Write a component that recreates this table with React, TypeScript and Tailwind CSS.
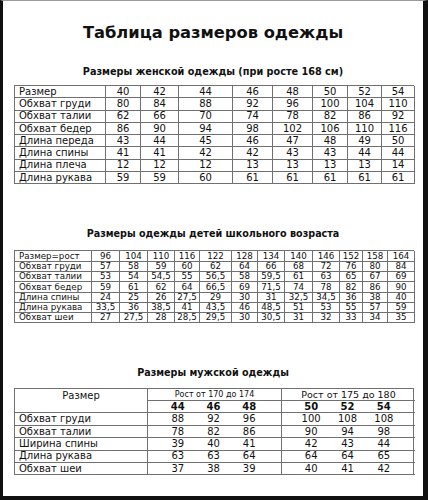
import React from "react";

const font = { fontFamily: '"DejaVu Sans", Verdana, sans-serif' };

const t1Cols = [91, 35, 38, 54, 40, 40, 35, 34, 33];
const t1Rows: string[][] = [
  ["Размер", "40", "42", "44", "46", "48", "50", "52", "54"],
  ["Обхват груди", "80", "84", "88", "92", "96", "100", "104", "110"],
  ["Обхват талии", "62", "66", "70", "74", "78", "82", "86", "92"],
  ["Обхват бедер", "86", "90", "94", "98", "102", "106", "110", "116"],
  ["Длина переда", "43", "44", "45", "46", "47", "48", "49", "50"],
  ["Длина спины", "41", "41", "42", "42", "43", "43", "44", "44"],
  ["Длина плеча", "12", "12", "12", "13", "13", "13", "13", "14"],
  ["Длина рукава", "59", "59", "60", "61", "61", "61", "61", "61"],
];

const t2Cols = [77, 28, 28, 27, 25, 32, 26, 27, 28, 27, 23, 25, 27];
const t2Rows: string[][] = [
  ["Размер=рост", "96", "104", "110", "116", "122", "128", "134", "140", "146", "152", "158", "164"],
  ["Обхват груди", "57", "58", "59", "60", "62", "64", "66", "68", "72", "76", "80", "84"],
  ["Обхват талии", "53", "54", "54,5", "55", "56,5", "58", "59,5", "61", "63", "65", "67", "69"],
  ["Обхват бедер", "59", "61", "62", "64", "66,5", "69", "71,5", "74", "78", "82", "86", "90"],
  ["Длина спины", "24", "25", "26", "27,5", "29", "30", "31", "32,5", "34,5", "36", "38", "40"],
  ["Длина рукава", "33,5", "36", "38,5", "41", "43,5", "46", "48,5", "51", "53", "55", "57", "59"],
  ["Обхват шеи", "27", "27,5", "28", "28,5", "29,5", "30", "30,5", "31", "32", "33", "34", "35"],
];

const t3Rows: { label: string; a: string[]; b: string[] }[] = [
  { label: "Обхват груди", a: ["88", "92", "96"], b: ["100", "108", "108"] },
  { label: "Обхват талии", a: ["78", "82", "86"], b: ["90", "94", "98"] },
  { label: "Ширина спины", a: ["39", "40", "41"], b: ["42", "43", "44"] },
  { label: "Длина рукава", a: ["63", "63", "64"], b: ["64", "64", "65"] },
  { label: "Обхват шеи", a: ["37", "38", "39"], b: ["40", "41", "42"] },
];

function GridTable({
  cols,
  rows,
  rowH,
  textCls,
}: {
  cols: number[];
  rows: string[][];
  rowH: string;
  textCls: string;
}) {
  return (
    <div className="w-[400px] border-t border-l border-[#707070]">
      {rows.map((r, i) => (
        <div key={i} className="flex">
          {r.map((c, j) => (
            <div
              key={j}
              style={{ width: cols[j] }}
              className={`${rowH} ${textCls} shrink-0 border-r border-b border-[#707070] flex items-center whitespace-nowrap overflow-hidden ${
                j === 0 ? "justify-start pl-[4px]" : "justify-center"
              }`}
            >
              {c}
            </div>
          ))}
        </div>
      ))}
    </div>
  );
}

function Triple({ v, cls, pad }: { v: string[]; cls: string; pad: string }) {
  return (
    <div className={`grid grid-cols-3 h-full items-center ${pad} ${cls}`}>
      {v.map((x, i) => (
        <div key={i} className="text-center">
          {x}
        </div>
      ))}
    </div>
  );
}

export default function App() {
  return (
    <div
      style={font}
      className="w-[428px] h-[500px] bg-white text-[#111] flex flex-col border-t border-l-[3px] border-r-[5px] border-b-[4px] border-t-[#9a9a9a] border-l-[#111] border-r-[#111] border-b-[#111]"
    >
      <div className="mt-[22px] text-center font-bold text-[16.3px] leading-[20px]">
        Таблица размеров одежды
      </div>
      <div className="mt-[22px] text-center font-bold text-[9.7px] leading-[14px]">
        Размеры женской одежды (при росте 168 см)
      </div>
      <div className="mt-[6px] pl-[11px]">
        <GridTable cols={t1Cols} rows={t1Rows} rowH="h-[12.3px]" textCls="text-[10px] leading-none" />
      </div>
      <div className="mt-[43px] text-center font-bold text-[9.6px] leading-[14px]">
        Размеры одежды детей школьного возраста
      </div>
      <div className="mt-[9px] pl-[11px]">
        <GridTable cols={t2Cols} rows={t2Rows} rowH="h-[10.3px]" textCls="text-[8.7px] leading-none" />
      </div>
      <div className="mt-[43px] text-center font-bold text-[9.6px] leading-[14px]">
        Размеры мужской одежды
      </div>
      <div className="mt-[8px] pl-[11px]">
        <div className="w-[400px] border-t border-l border-r border-[#707070] grid grid-cols-[133px_134px_133px] text-[10px] leading-none">
          <div className="row-span-2 border-r border-b border-[#707070] text-center pt-[2px]">Размер</div>
          <div className="h-[11.6px] border-r border-b border-[#707070] flex items-center justify-center text-[8px]">
            Рост от 170 до 174
          </div>
          <div className="h-[11.6px] border-b border-[#707070] flex items-center justify-center text-[9.5px]">
            Рост от 175 до 180
          </div>
          <div className="h-[12.4px] border-r border-b border-[#707070]">
            <Triple v={["44", "46", "48"]} cls="font-bold" pad="pl-[12px] pr-[14px]" />
          </div>
          <div className="h-[12.4px] border-b border-[#707070]">
            <Triple v={["50", "52", "54"]} cls="font-bold" pad="pl-[11px] pr-[13px]" />
          </div>
          {t3Rows.map((r, i) => (
            <React.Fragment key={i}>
              <div className="h-[12.4px] border-r border-b border-[#707070] flex items-center pl-[4px] whitespace-nowrap">
                {r.label}
              </div>
              <div className="h-[12.4px] border-r border-b border-[#707070]">
                <Triple v={r.a} cls="" pad="pl-[12px] pr-[14px]" />
              </div>
              <div className="h-[12.4px] border-b border-[#707070]">
                <Triple v={r.b} cls="" pad="pl-[11px] pr-[13px]" />
              </div>
            </React.Fragment>
          ))}
        </div>
      </div>
    </div>
  );
}
